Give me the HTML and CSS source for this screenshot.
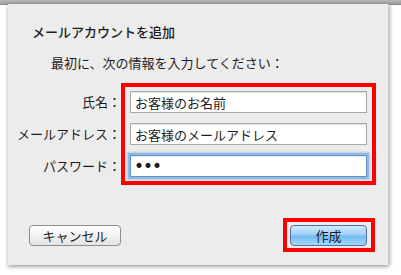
FILE: index.html
```html
<!DOCTYPE html>
<html lang="ja">
<head>
  <meta charset="UTF-8" />
  <title>メールアカウントを追加</title>
  <link rel="stylesheet" href="styles.css">
</head>
<body>
  <div class="topbar"></div>

  <div class="dialog">
    <h1>メールアカウントを追加</h1>
    <p class="intro">最初に、次の情報を入力してください：</p>

    <div class="form">
      <div class="labels">
        <label for="name">氏名：</label>
        <label for="mail">メールアドレス：</label>
        <label for="pass">パスワード：</label>
      </div>
      <div class="fields mark">
        <input type="text" id="name" value="お客様のお名前" />
        <input type="text" id="mail" value="お客様のメールアドレス" />
        <input type="password" id="pass" class="focus" value="abc" />
      </div>
    </div>

    <div class="buttons">
      <button class="btn">キャンセル</button>
      <div class="mark mark-btn">
        <button class="btn primary">作成</button>
      </div>
    </div>
  </div>
</body>
</html>
```

FILE: styles.css
```css
* {
  box-sizing: border-box;
}

html, body {
  margin: 0;
  width: 401px;
  height: 275px;
  overflow: hidden;
}

body {
  background: #fff;
  font-family: "Noto Sans CJK JP", "Noto Sans", sans-serif;
  font-size: 13px;
  color: #1c1c1c;
}

/* barre de la fenêtre derrière */
.topbar {
  height: 5px;
  background: linear-gradient(#b8b8b8, #9c9c9c);
  border-bottom: 1px solid #8a8a8a;
}

.dialog {
  margin-left: 8px;
  width: 381px;
  height: 261px;
  margin-top: -1px;
  background: #ececec;
  border-right: 1px solid #c9c9c9;
  box-shadow: 0 2px 4px rgba(0, 0, 0, 0.35), 3px 0 2px rgba(0, 0, 0, 0.06);
  display: flex;
  flex-direction: column;
  padding-top: 20px;
}

h1 {
  margin: 0 0 0 24px;
  font-size: 13px;
  font-weight: 500;
  line-height: 16px;
}

.intro {
  margin: 15px 0 0 43px;
  line-height: 16px;
}

.form {
  display: flex;
  margin-top: 12px;
}

.labels {
  width: 113px;
  display: flex;
  flex-direction: column;
  gap: 10px;
  padding-top: 8px;
}

.labels label {
  height: 22px;
  line-height: 22px;
  text-align: right;
  white-space: nowrap;
}

/* cadre rouge de mise en évidence */
.mark {
  border: 4px solid #ff0000;
}

.fields {
  width: 255px;
  padding: 4px 5px;
  display: flex;
  flex-direction: column;
  gap: 10px;
}

.fields input {
  height: 22px;
  width: 100%;
  border: 1px solid #a8a8a8;
  background: #fff;
  box-shadow: inset 0 1px 1px rgba(0, 0, 0, 0.12);
  font-family: inherit;
  font-size: 13px;
  color: #1c1c1c;
  padding: 0 4px;
  outline: none;
}

.fields input.focus {
  border: 1px solid #5f95cc;
  box-shadow: 0 0 0 2px #8fb9e4, 0 0 2px 3px rgba(120, 170, 225, 0.5), inset 0 1px 1px rgba(0, 0, 0, 0.1);
  font-family: "DejaVu Sans", sans-serif;
  font-size: 17px;
  letter-spacing: -1px;
  padding-left: 3px;
}

.buttons {
  margin-top: auto;
  margin-bottom: 13px;
  display: flex;
  align-items: center;
  justify-content: space-between;
  padding: 0 13px 0 21px;
}

.btn {
  height: 21px;
  width: 92px;
  border: 1px solid #8e8e8e;
  border-radius: 4px;
  background: linear-gradient(#ffffff, #f2f2f2 50%, #e4e4e4);
  font-family: inherit;
  font-size: 13px;
  color: #1c1c1c;
  padding: 0;
  line-height: 19px;
}

.mark-btn {
  padding: 3px 4px 2px 3px;
}

.btn.primary {
  width: 77px;
  border-color: #5c6a9c;
  background: linear-gradient(#cfeafd, #9fd0f8 45%, #72bcf5 55%, #a3d8fb);
}
```
